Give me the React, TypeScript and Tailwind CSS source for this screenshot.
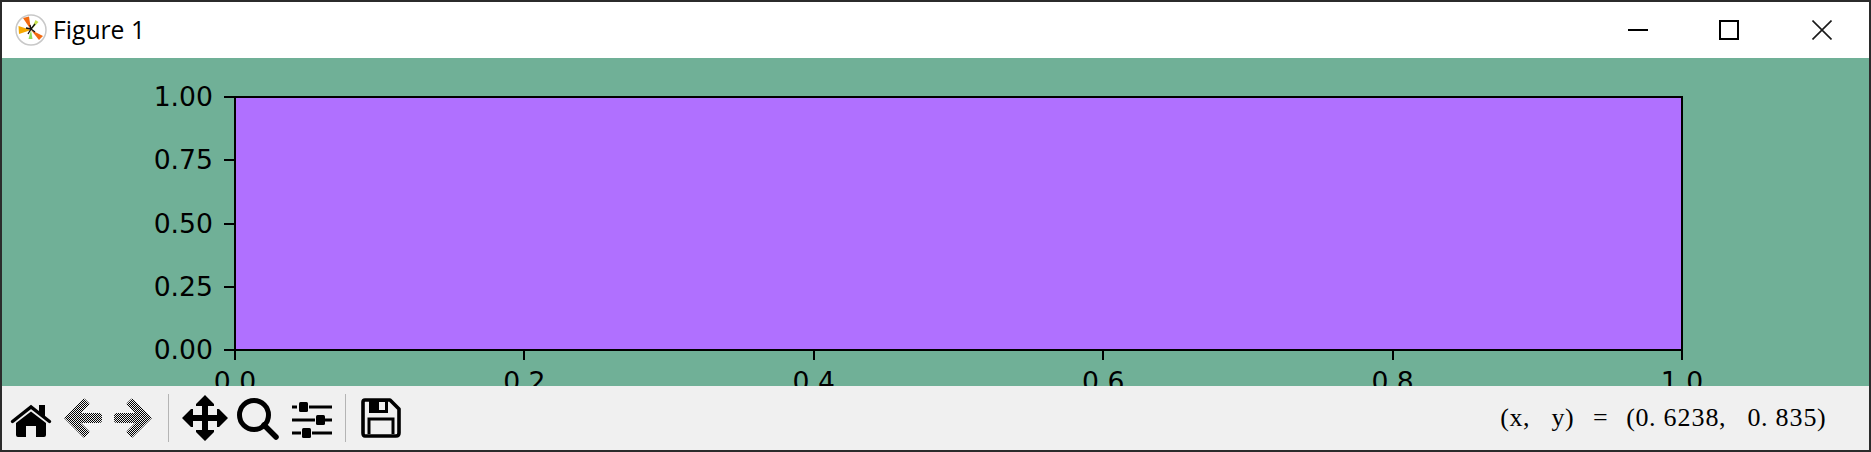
import React from "react";

const yTicks = [
  { label: "1.00", f: 0 },
  { label: "0.75", f: 0.25 },
  { label: "0.50", f: 0.5 },
  { label: "0.25", f: 0.75 },
  { label: "0.00", f: 1 },
];
const xTicks = ["0.0", "0.2", "0.4", "0.6", "0.8", "1.0"];
const coords = "(x, y) = (0.6238, 0.835)".split("");

function cellClass(c: string) {
  if (c === "(") return "w-[14px] text-right";
  if (c === ")" || c === "," || c === ".") return "w-[14px] text-left";
  return "w-[14px] text-center";
}

function Logo() {
  return (
    <svg width="32" height="32" viewBox="0 0 32 32" className="shrink-0">
      <circle cx="16" cy="16" r="15" fill="#ffffff" stroke="#c8c8c8" strokeWidth="1.5" />
      <path d="M16 16 L8 4 L14 2.5 Z" fill="#f26a10" />
      <path d="M16 16 L3.5 12 L4 20 Z" fill="#f5a800" />
      <path d="M16 16 L24 26 L28 22 Z" fill="#f26a10" />
      <path d="M16 16 L13.5 25 L17.5 25 Z" fill="#8fdc5a" />
      <path d="M16 16 L20.5 6 L23.5 8 Z" fill="#c4e04a" />
      <path d="M16 15 L20 10 M16 15 L13 20 M16 15 L11 14 M16 15 L20 18 M16 15 L15 11" stroke="#111" strokeWidth="1.3" />
    </svg>
  );
}

function Home() {
  return (
    <svg width="42" height="34" viewBox="0 0 42 34" className="shrink-0">
      <path d="M29 2 H35 V14 L29 9 Z" fill="#000" />
      <path d="M2.5 18.5 L21 4 L39.5 18.5" fill="none" stroke="#000" strokeWidth="3.4" strokeLinecap="round" />
      <path d="M6 20 L21 8.5 L36 20 V32 Q36 34 34 34 H26 V23 H16 V34 H8 Q6 34 6 32 Z" fill="#000" />
    </svg>
  );
}

function Arrow({ id, flip }: { id: string; flip?: boolean }) {
  return (
    <svg width="38" height="40" viewBox="0 0 38 40" className="shrink-0">
      <defs>
        <pattern id={id} width="2" height="2" patternUnits="userSpaceOnUse">
          <rect width="1" height="1" fill="#000" />
          <rect x="1" y="1" width="1" height="1" fill="#000" />
        </pattern>
      </defs>
      <path
        transform={flip ? "translate(38 0) scale(-1 1)" : undefined}
        d="M0 20 L19 1 Q20 0 21 1 L25 5 Q26 6 25 7 L17 15 H35 Q38 15 38 18 V22 Q38 25 35 25 H17 L25 33 Q26 34 25 35 L21 39 Q20 40 19 39 Z"
        fill={`url(#${id})`}
      />
    </svg>
  );
}

function Move() {
  return (
    <svg width="46" height="46" viewBox="0 0 46 46" className="shrink-0">
      <path
        d="M23 0 L32 9 L32 11 H26 V20 H35 V14 H37 L46 23 L37 32 H35 V26 H26 V35 H32 V37 L23 46 L14 37 V35 H20 V26 H11 V32 H9 L0 23 L9 14 H11 V20 H20 V11 H14 V9 Z"
        fill="#000"
      />
    </svg>
  );
}

function Zoom() {
  return (
    <svg width="44" height="44" viewBox="0 0 44 44" className="shrink-0">
      <circle cx="17" cy="17" r="14.5" fill="none" stroke="#000" strokeWidth="5" />
      <path d="M27 27 L39 39" stroke="#000" strokeWidth="5.5" strokeLinecap="round" />
    </svg>
  );
}

function Sliders() {
  return (
    <svg width="40" height="38" viewBox="0 0 40 38" className="shrink-0">
      <path d="M0 7 H5 M17 7 H40 M0 20 H23 M33 20 H40 M0 33 H9 M20 33 H40" stroke="#000" strokeWidth="3" />
      <rect x="7" y="2" width="9" height="10" rx="1.5" fill="#000" />
      <rect x="24" y="15" width="9" height="10" rx="1.5" fill="#000" />
      <rect x="10" y="28" width="9" height="10" rx="1.5" fill="#000" />
    </svg>
  );
}

function Save() {
  return (
    <svg width="40" height="40" viewBox="0 0 40 40" className="shrink-0">
      <path
        d="M4 2 H29 L38 11 V35 Q38 38 35 38 H4 Q2 38 2 35 V4 Q2 2 4 2 Z"
        fill="none"
        stroke="#000"
        strokeWidth="3.6"
        strokeLinejoin="round"
      />
      <path d="M8 2 H27 V15 H8 Z" fill="#000" />
      <rect x="18" y="4" width="6" height="8" fill="#f0f0f0" />
      <path d="M8 36 V21 H32 V36" fill="none" stroke="#000" strokeWidth="3" />
    </svg>
  );
}

export default function App() {
  return (
    <div className="flex h-[452px] w-[1871px] flex-col overflow-hidden border-2 border-[#2b2b2b] bg-white">
      <div className="flex h-[56px] shrink-0 items-center bg-white">
        <div className="ml-[13px]">
          <Logo />
        </div>
        <span className="ml-[6px] text-[24.7px] text-black [font-family:'Open_Sans','Noto_Sans',sans-serif]">Figure 1</span>
        <div className="ml-auto flex items-center">
          <svg width="20" height="20" viewBox="0 0 20 20" className="mr-[71px]">
            <path d="M0 10 H20" stroke="#000" strokeWidth="2" />
          </svg>
          <svg width="20" height="20" viewBox="0 0 20 20" className="mr-[73px]">
            <rect x="1" y="1" width="18" height="18" fill="none" stroke="#000" strokeWidth="2" />
          </svg>
          <svg width="20" height="20" viewBox="0 0 20 20" className="mr-[37px]">
            <path d="M0.5 0.5 L19.5 19.5 M19.5 0.5 L0.5 19.5" stroke="#1a1a1a" strokeWidth="1.6" />
          </svg>
        </div>
      </div>

      <div className="relative min-h-0 flex-1 overflow-hidden bg-[#70b097] pl-[232px] pt-[38px] [font-family:'DejaVu_Sans',sans-serif] text-[26.67px] text-black">
        <div className="relative h-[255px] w-[1449px] border-2 border-black bg-[#b070ff]">
          {yTicks.map((t) => (
            <div
              key={t.label}
              className="absolute left-[-12px] flex h-[2px] w-[10px] items-center bg-black"
              style={{ top: `${-2 + t.f * 253}px` }}
            >
              <span className="absolute right-[21px] top-[-15px] leading-[32px]">{t.label}</span>
            </div>
          ))}
          {xTicks.map((l, i) => (
            <div
              key={l}
              className="absolute bottom-[-11px] h-[9px] w-[2px] bg-black"
              style={{ left: `${-2 + (i * 1447) / 5}px` }}
            >
              <span className="absolute left-[-24px] top-[15px] w-[50px] text-center leading-[32px]">{l}</span>
            </div>
          ))}
        </div>
      </div>

      <div className="flex h-[64px] shrink-0 items-center bg-[#f0f0f0] pl-[8px]">
        <div className="mt-[3px]"><Home /></div>
        <div className="ml-[12px]"><Arrow id="d1" /></div>
        <div className="ml-[12px]"><Arrow id="d2" flip /></div>
        <div className="ml-[16px] h-[48px] w-[1px] bg-[#b4b4b4]" />
        <div className="ml-[13px]"><Move /></div>
        <div className="ml-[9px] mt-[4px]"><Zoom /></div>
        <div className="ml-[11px] mt-[2px]"><Sliders /></div>
        <div className="ml-[13px] h-[48px] w-[1px] bg-[#b4b4b4]" />
        <div className="ml-[15px]"><Save /></div>
        <div className="ml-auto mr-[38px] flex whitespace-pre text-[26px] leading-[32px] text-black [font-family:'Liberation_Serif',serif]">
          {coords.map((c, i) => (
            <span key={i} className={cellClass(c)}>{c}</span>
          ))}
        </div>
      </div>
    </div>
  );
}
